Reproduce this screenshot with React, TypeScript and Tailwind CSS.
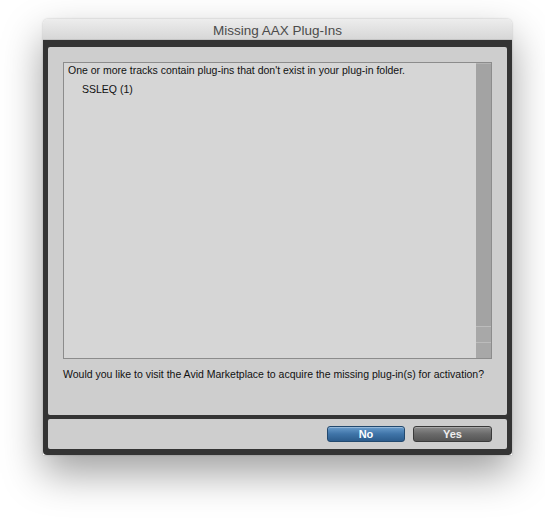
import React from 'react';

const font = { fontFamily: '"Liberation Sans", Arial, sans-serif' };

const App: React.FC = () => {
  return (
    <div className="w-[545px] h-[525px] bg-white pt-[19px] pl-[43px]" style={font}>
      <div className="w-[469px] rounded-t-[5px] shadow-[0_18px_40px_rgba(0,0,0,0.38),0_0_2px_rgba(0,0,0,0.25)]">
        {/* title bar */}
        <div className="h-[21px] rounded-t-[5px] bg-gradient-to-b from-[#ededed] to-[#d7d7d7] border-b border-[#c4c4c4] flex items-center justify-center pt-[3px]">
          <span className="text-[13.5px] text-[#4b4b4b] leading-none">Missing AAX Plug-Ins</span>
        </div>

        {/* dark frame */}
        <div className="bg-[#343434] px-[5px] pt-[7px] pb-[6px] rounded-b-[4px] flex flex-col gap-[4px]">
          {/* main panel */}
          <div className="h-[368px] bg-[#cecece] rounded-[2px] px-[15px] pt-[15px] flex flex-col">
            <div className="h-[297px] border border-[#8c8c8c] bg-[#d6d6d6] flex">
              <div className="flex-1 pl-[4px] text-[10.5px] text-[#111] leading-[14px] whitespace-nowrap">
                <div>One or more tracks contain plug-ins that don't exist in your plug-in folder.</div>
                <div className="pl-[14px] mt-[5px]">SSLEQ (1)</div>
              </div>
              <div className="w-[15px] bg-[#a3a3a3] flex flex-col">
                <div className="flex-1 border-t border-[#b4b4b4]" />
                <div className="h-[16px] border-t border-[#bcbcbc] bg-[#a8a8a8]" />
                <div className="h-[16px] border-t border-[#bcbcbc] bg-[#a8a8a8]" />
              </div>
            </div>
            <div className="pt-[8px] text-[10.5px] text-[#111] leading-[14px] whitespace-nowrap">
              Would you like to visit the Avid Marketplace to acquire the missing plug-in(s) for activation?
            </div>
          </div>

          {/* button panel */}
          <div className="h-[30px] bg-[#cecece] rounded-[2px] flex items-start justify-end pr-[15px] pt-[7px] gap-[8px]">
            <button className="w-[78px] h-[16px] rounded-[3px] border border-[#23496e] bg-gradient-to-b from-[#6a9dcc] via-[#3f74a8] to-[#2c5c8c] text-white text-[11px] font-bold leading-none shadow-[inset_0_1px_0_rgba(255,255,255,0.3)]">
              No
            </button>
            <button className="w-[79px] h-[16px] rounded-[3px] border border-[#3a3a3a] bg-gradient-to-b from-[#8e8e8e] via-[#6a6a6a] to-[#555555] text-[#eeeeee] text-[11px] font-bold leading-none shadow-[inset_0_1px_0_rgba(255,255,255,0.25)]">
              Yes
            </button>
          </div>
        </div>
      </div>
    </div>
  );
};

export default App;
